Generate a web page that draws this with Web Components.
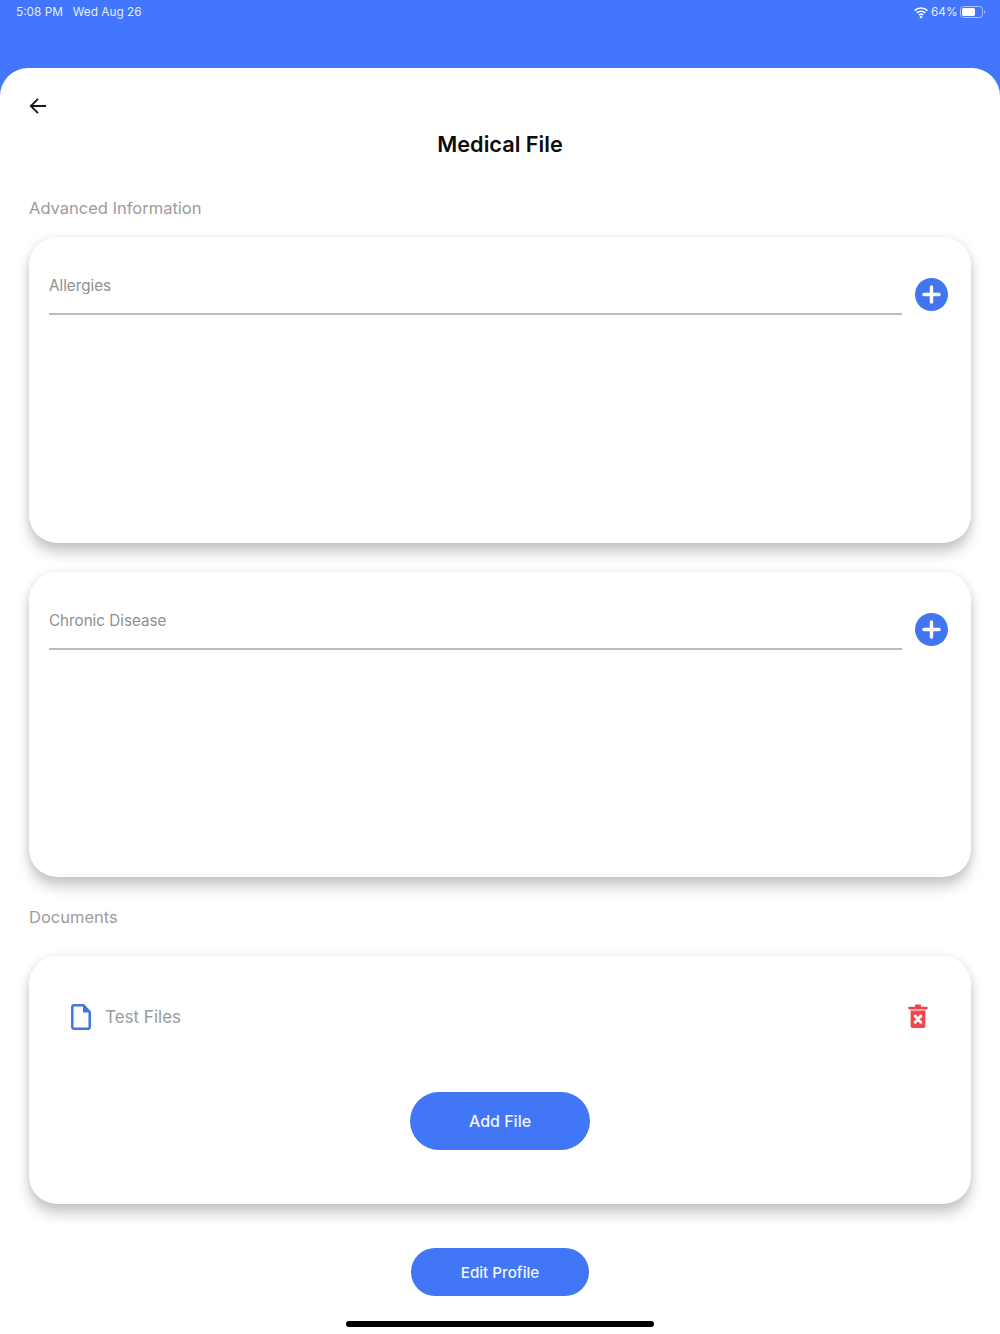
<!DOCTYPE html>
<html>
<head>
<meta charset="utf-8">
<title>Medical File</title>
<style>
    html, body { margin: 0; background: #fff; font-family: Inter, "Liberation Sans", sans-serif; }
</style>
</head>
<body>
<medical-screen>
    <status-bar time="5:08 PM" date="Wed Aug 26" battery="64%"></status-bar>
    <top-nav heading="Medical File"></top-nav>
    <section-label style="margin-top:39px">Advanced Information</section-label>
    <info-card label="Allergies" style="margin-top:19px;height:306px"></info-card>
    <info-card label="Chronic Disease" style="margin-top:29px;height:305px"></info-card>
    <section-label style="margin-top:30px">Documents</section-label>
    <documents-card name="Test Files" style="margin-top:29px"></documents-card>
    <pill-button style="margin-top:44px;width:178px;height:48px;font-size:15.2px">Edit Profile</pill-button>
    <home-bar></home-bar>
</medical-screen>

<script>
class MedicalScreen extends HTMLElement {
    constructor() {
        super();
        this.attachShadow({ mode: 'open' }).innerHTML = `
            <style>
                :host { display: block; width: 1000px; height: 1334px; overflow: hidden; background: #4176fd; }
                .sheet {
                    background: #fff;
                    border-radius: 28px 28px 0 0;
                    height: 1266px;
                    display: flex;
                    flex-direction: column;
                }
            </style>
            <slot name="bar"></slot>
            <div class="sheet"><slot></slot></div>
        `;
    }

    connectedCallback() {
        this.querySelector('status-bar').slot = 'bar';
    }
}

class StatusBar extends HTMLElement {
    connectedCallback() {
        this.attachShadow({ mode: 'open' }).innerHTML = `
            <style>
                :host {
                    display: flex;
                    justify-content: space-between;
                    height: 68px;
                    padding: 4px 15px 0 16px;
                    box-sizing: border-box;
                    color: #e6edff;
                    font-size: 11.8px;
                    line-height: 16px;
                }
                .left { display: flex; gap: 10px; }
                .right { display: flex; align-items: flex-start; gap: 4px; }
                .wifi { margin-right: -1px; }
                .pct { margin-right: -1.5px; }
                svg { display: block; }
            </style>
            <div class="left"><span>${this.getAttribute('time')}</span><span>${this.getAttribute('date')}</span></div>
            <div class="right">
                <svg class="wifi" width="14" height="16" viewBox="0 0 14 16">
                    <path d="M.6 6.6a9 9 0 0 1 12.8 0M2.8 8.9a6 6 0 0 1 8.4 0M4.9 11a3 3 0 0 1 4.2 0" fill="none" stroke="#fff" stroke-width="1.6"/>
                    <circle cx="7" cy="13" r="1.3" fill="#fff"/>
                </svg>
                <span class="pct">${this.getAttribute('battery')}</span>
                <svg width="25" height="16" viewBox="0 0 25 16">
                    <rect x=".5" y="2.5" width="22" height="11" rx="3" fill="none" stroke="#a9c1fe"/>
                    <rect x="2" y="4" width="13" height="8" rx="1.6" fill="#fff"/>
                    <path d="M24 6.5a1.5 1.5 0 0 1 0 3z" fill="#a9c1fe"/>
                </svg>
            </div>
        `;
    }
}

class TopNav extends HTMLElement {
    connectedCallback() {
        this.attachShadow({ mode: 'open' }).innerHTML = `
            <style>
                :host { display: block; padding: 26px 29px 0; }
                svg { display: block; }
                h1 {
                    margin: 12px 0 0;
                    font-size: 21.7px;
                    line-height: 29px;
                    font-weight: 600;
                    text-align: center;
                    color: #0c0c0e;
                }
            </style>
            <svg width="24" height="24" viewBox="0 0 24 24">
                <path d="M17 12H2M9 4.8L1.8 12 9 19.2" fill="none" stroke="#1a1a1a" stroke-width="1.9"/>
            </svg>
            <h1>${this.getAttribute('heading')}</h1>
        `;
    }
}

class SectionLabel extends HTMLElement {
    constructor() {
        super();
        this.attachShadow({ mode: 'open' }).innerHTML = `
            <style>
                :host {
                    display: block;
                    padding: 0 29px;
                    font-size: 16.5px;
                    line-height: 20px;
                    color: #9c9c9c;
                }
            </style>
            <slot></slot>
        `;
    }
}

const cardStyle = `
    :host {
        display: block;
        margin-left: 29px;
        margin-right: 29px;
        box-sizing: border-box;
        background: #fff;
        border-radius: 28px;
        box-shadow: 0 10px 13px 0 rgba(0, 0, 0, .2), 0 0 9px rgba(0, 0, 0, .09);
    }
`;

class InfoCard extends HTMLElement {
    connectedCallback() {
        this.attachShadow({ mode: 'open' }).innerHTML = `
            <style>
                ${cardStyle}
                :host { padding: 37px 23px 0 20px; }
                .row { display: flex; align-items: flex-end; gap: 13px; }
                .field {
                    flex: 1;
                    height: 41px;
                    box-sizing: border-box;
                    border-bottom: 2px solid #bcbcbc;
                    font-size: 15.2px;
                    line-height: 24px;
                    color: #8f8f8f;
                }
                .add {
                    width: 33px;
                    height: 33px;
                    margin-bottom: 4px;
                    border-radius: 50%;
                    background: #4176f0;
                }
                svg { display: block; }
            </style>
            <div class="row">
                <div class="field">${this.getAttribute('label')}</div>
                <div class="add">
                    <svg width="33" height="33" viewBox="0 0 33 33">
                        <path d="M16.5 9v15M9 16.5h15" stroke="#fff" stroke-width="3.4" stroke-linecap="round"/>
                    </svg>
                </div>
            </div>
        `;
    }
}

class DocumentsCard extends HTMLElement {
    connectedCallback() {
        this.attachShadow({ mode: 'open' }).innerHTML = `
            <style>
                ${cardStyle}
                :host { display: flex; flex-direction: column; height: 248px; padding: 48px 42px 0; }
                .row { display: flex; align-items: center; height: 26px; }
                .name { margin-left: 14px; flex: 1; font-size: 17px; color: #9a9a9a; }
                .trash { margin: -2px 1px 0 0; }
                svg { display: block; }
                pill-button { margin-top: 62px; width: 180px; height: 58px; font-size: 16px; }
            </style>
            <div class="row">
                <svg width="20" height="26" viewBox="0 0 20 26">
                    <path d="M3 1.3h9.5L18.7 8v15a1.8 1.8 0 0 1-1.8 1.8H3A1.8 1.8 0 0 1 1.3 23V3A1.8 1.8 0 0 1 3 1.3z" fill="none" stroke="#4176e0" stroke-width="2.5" stroke-linejoin="round"/>
                    <path d="M12 1.5L18.7 8.5H12z" fill="#4176e0"/>
                </svg>
                <span class="name">${this.getAttribute('name')}</span>
                <svg class="trash" width="20" height="26" viewBox="0 0 20 26">
                    <path d="M1.5 3.8h17a.9.9 0 0 1 0 2.6h-17a.9.9 0 0 1 0-2.6zM7 3.8V2.6c0-.7.5-1.100 1.100-1.100h3.800c.6 0 1.100.4 1.100 1.100v1.200z" fill="#f0474f"/>
                    <path d="M2.6 7.4h14.800V23a2 2 0 0 1-2 2H4.600a2 2 0 0 1-2-2z" fill="#f0474f"/>
                    <path d="M7.2 13l5.6 6.2M12.8 13l-5.6 6.2" stroke="#fff" stroke-width="2.8" stroke-linecap="round"/>
                </svg>
            </div>
            <pill-button>Add File</pill-button>
        `;
    }
}

class PillButton extends HTMLElement {
    constructor() {
        super();
        this.attachShadow({ mode: 'open' }).innerHTML = `
            <style>
                :host {
                    display: flex;
                    flex: none;
                    align-items: center;
                    justify-content: center;
                    align-self: center;
                    border-radius: 30px;
                    background: #4176f6;
                    color: #f2f5ff;
                    font-weight: 500;
                }
            </style>
            <slot></slot>
        `;
    }
}

class HomeBar extends HTMLElement {
    constructor() {
        super();
        this.attachShadow({ mode: 'open' }).innerHTML = `
            <style>
                :host {
                    display: block;
                    flex: none;
                    align-self: center;
                    width: 308px;
                    height: 6px;
                    margin-top: 25px;
                    border-radius: 3px;
                    background: #000;
                }
            </style>
        `;
    }
}

customElements.define('pill-button', PillButton);
customElements.define('medical-screen', MedicalScreen);
customElements.define('status-bar', StatusBar);
customElements.define('top-nav', TopNav);
customElements.define('section-label', SectionLabel);
customElements.define('info-card', InfoCard);
customElements.define('documents-card', DocumentsCard);
customElements.define('home-bar', HomeBar);
</script>
</body>
</html>
